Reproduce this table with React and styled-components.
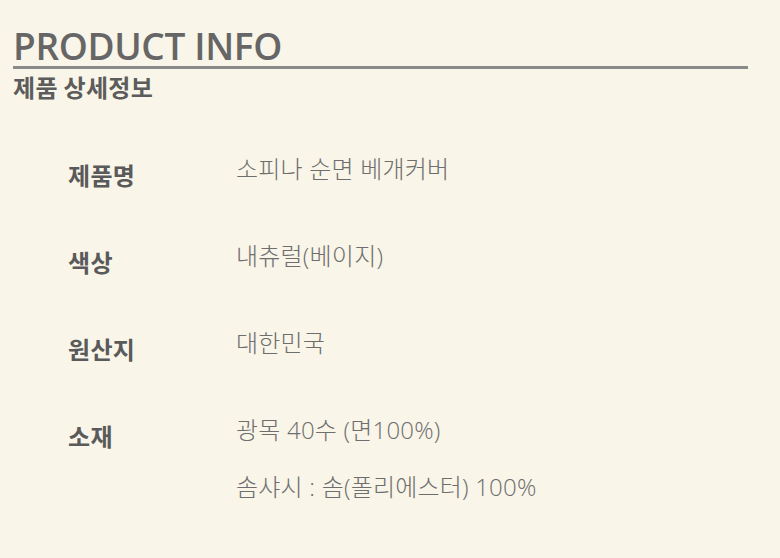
import React from "react";
import styled, { createGlobalStyle } from "styled-components";

const Global = createGlobalStyle`
  html, body { margin: 0; padding: 0; background: #f9f5e8; }
  body { font-family: "Open Sans", "Noto Sans CJK KR", sans-serif; }
`;

const Page = styled.div`
  width: 780px;
  height: 558px;
  box-sizing: border-box;
  padding: 26px 32px 0 13px;
  background: #f9f5e8;
`;

const Header = styled.header`
  display: flex;
  flex-direction: column;
`;

const Title = styled.h1`
  margin: 0;
  font-family: "Open Sans", "Noto Sans CJK KR", sans-serif;
  font-weight: 600;
  font-size: 37px;
  line-height: 40px;
  letter-spacing: -0.35px;
  color: #666666;
  border-bottom: 3px solid #8a8a8a;
`;

const Subtitle = styled.h2`
  margin: 0;
  font-family: "Noto Sans CJK KR", sans-serif;
  font-weight: 700;
  font-size: 24px;
  line-height: 35px;
  letter-spacing: 0.3px;
  color: #5c5c5c;
`;

const Table = styled.div`
  display: grid;
  grid-template-columns: 168px 1fr;
  row-gap: 46px;
  padding: 47px 0 0 55px;
`;

const Label = styled.div`
  font-family: "Noto Sans CJK KR", sans-serif;
  font-weight: 700;
  font-size: 24px;
  line-height: 35px;
  letter-spacing: 0.3px;
  color: #5a5a5a;
  padding-top: 6px;
`;

const Values = styled.div`
  display: flex;
  flex-direction: column;
  gap: 22px;
`;

const Value = styled.div`
  font-family: "Open Sans", "Noto Sans CJK KR", sans-serif;
  font-weight: 300;
  font-size: 24px;
  line-height: 35px;
  letter-spacing: 0.2px;
  color: #6e6e6e;
`;

const rows = [
  ["제품명", ["소피나 순면 베개커버"]],
  ["색상", ["내츄럴(베이지)"]],
  ["원산지", ["대한민국"]],
  ["소재", ["광목 40수 (면100%)", "솜샤시 : 솜(폴리에스터) 100%"]],
];

export default function App() {
  return (
    <Page>
      <Global />
      <Header>
        <Title>PRODUCT INFO</Title>
        <Subtitle>제품 상세정보</Subtitle>
      </Header>
      <Table>
        {rows.map(([label, values]) => (
          <React.Fragment key={label}>
            <Label>{label}</Label>
            <Values>
              {values.map((v) => (
                <Value key={v}>{v}</Value>
              ))}
            </Values>
          </React.Fragment>
        ))}
      </Table>
    </Page>
  );
}
